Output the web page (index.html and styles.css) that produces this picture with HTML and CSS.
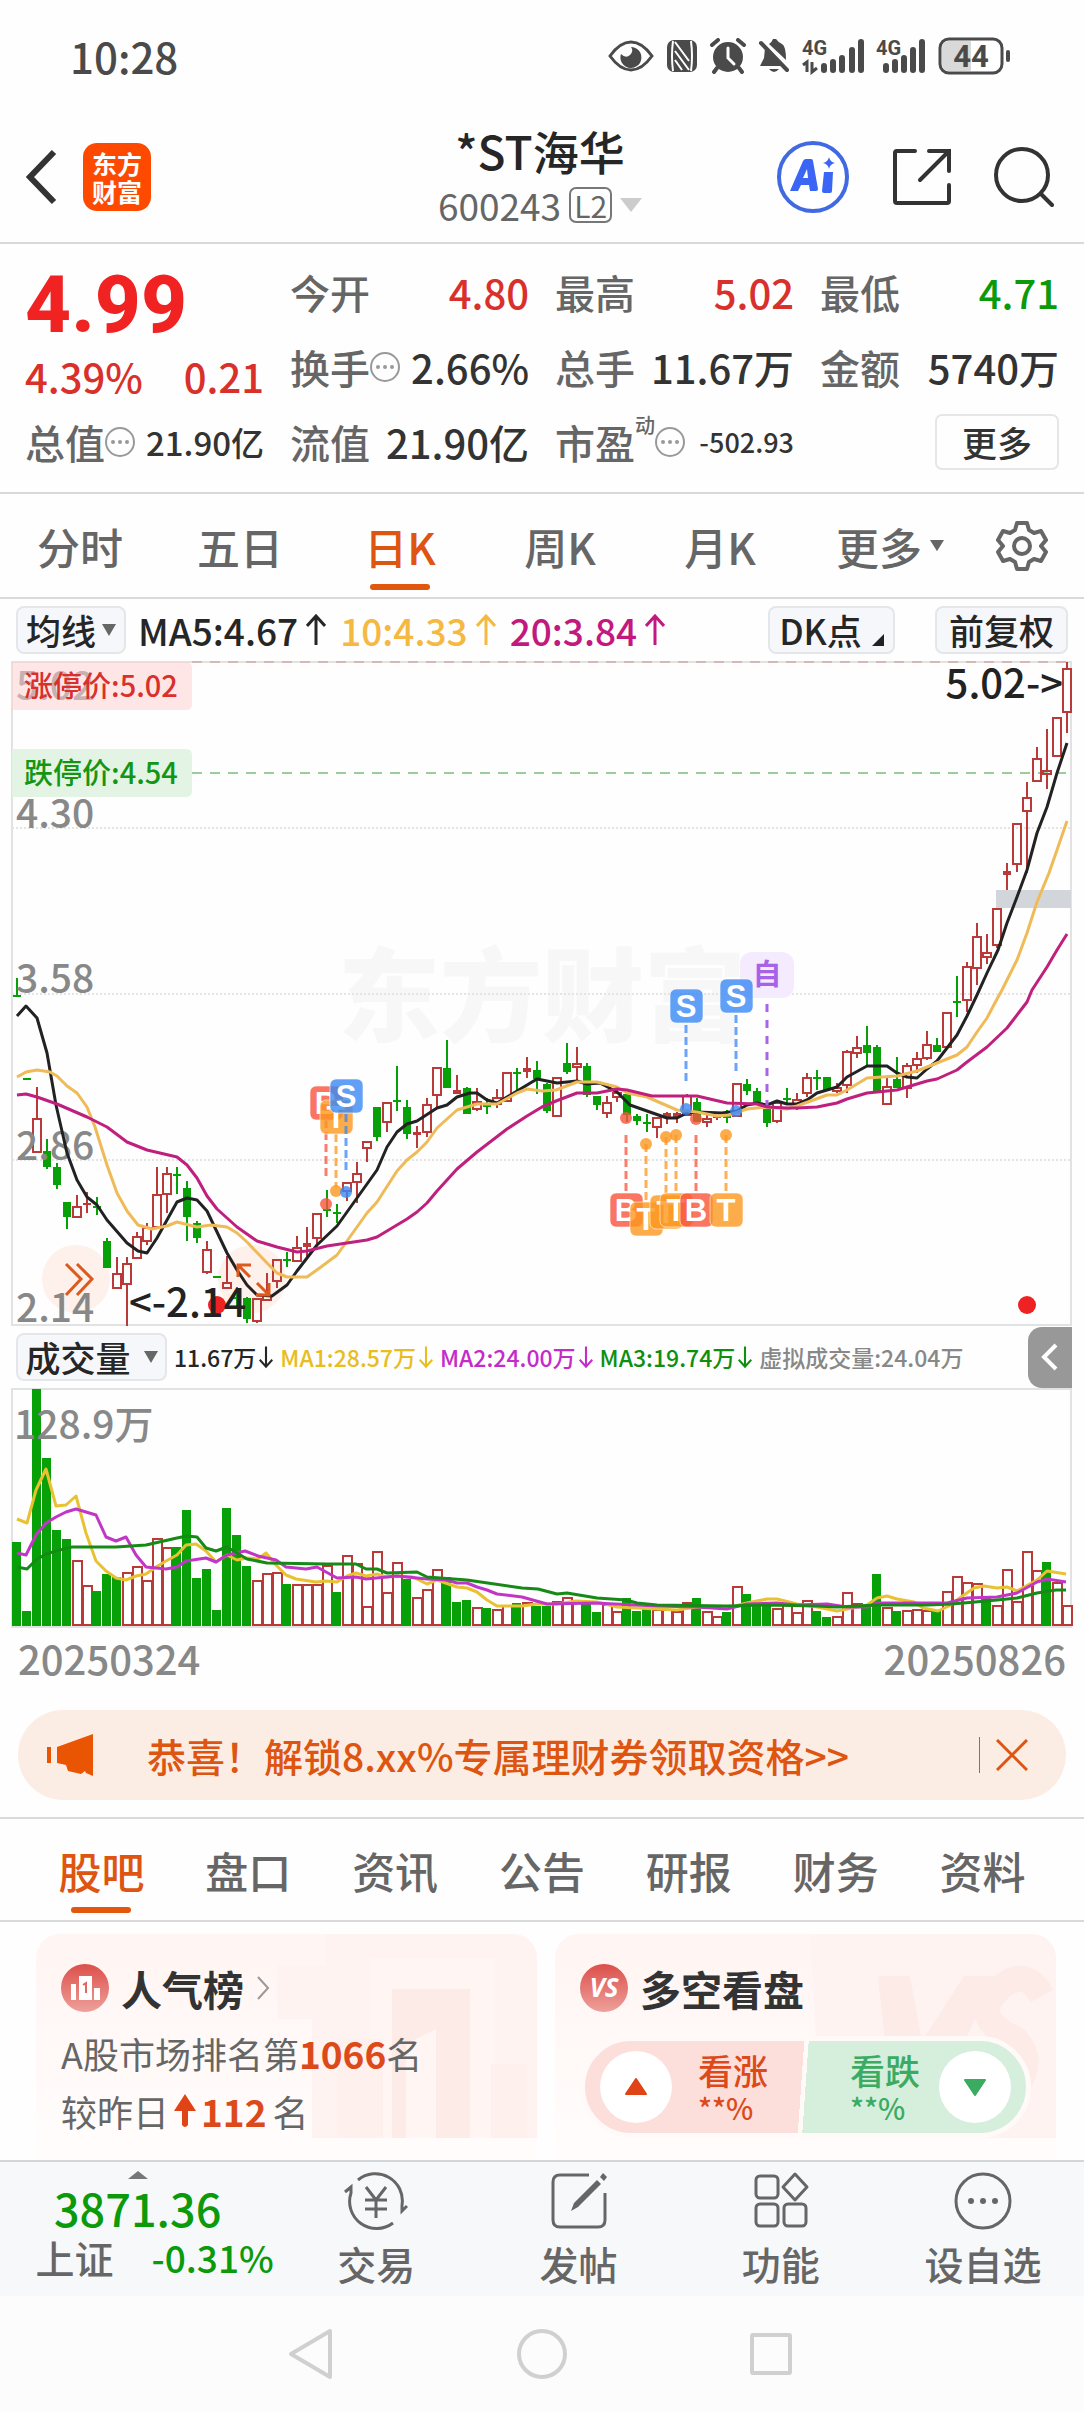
FILE: index.html
```html
<!DOCTYPE html>
<html lang="zh-CN">
<head>
    <meta charset="UTF-8">
    <meta name="viewport" content="width=device-width, initial-scale=1.0">
    <title>*ST海华 600243</title>
    <link rel="stylesheet" href="styles.css">
</head>
<body>
    <div class="status-bar">
        <span class="clock">10:28</span>
        <div class="status-icons">
            <svg width="46" height="34" viewBox="0 0 46 34"><path d="M2 17Q12 3 23 3T44 17Q34 31 23 31T2 17Z" fill="none" stroke="#4a4a4a" stroke-width="3"/><path d="M23 8a10.500 10.500 0 1 1-10 7q5 5 9 1t1-8z" fill="#4a4a4a"/></svg>
            <svg width="32" height="34" viewBox="0 0 32 34"><rect x="1" y="1" width="30" height="32" rx="7" fill="#4a4a4a"/><path d="M7 2q-2 15 0 30M25 2q2 15 0 30" fill="none" stroke="#fff" stroke-width="2"/><path d="M9 3l14 19M9 12l14 19M9 21l7 10" stroke="#fff" stroke-width="2"/></svg>
            <svg width="36" height="36" viewBox="0 0 36 36"><circle cx="18" cy="19" r="15" fill="#4a4a4a"/><path d="M2 7l6-5M34 7l-6-5M7 30l-3 4M29 30l3 4" stroke="#4a4a4a" stroke-width="4" stroke-linecap="round"/><path d="M18 10v10l6 6" fill="none" stroke="#fff" stroke-width="3" stroke-linecap="round"/></svg>
            <svg width="32" height="36" viewBox="0 0 32 36"><path d="M7 10L26 28H2l4-8zM11 6q3-2 4-5h3q2 3 6 5t4 16zM11 31h10q-5 6-10 0z" fill="#4a4a4a"/><path d="M3 5l26 27" stroke="#4a4a4a" stroke-width="4" stroke-linecap="round"/></svg>
            <svg width="62" height="38" viewBox="0 0 62 38"><text x="0" y="18" class="net">4G</text><path d="M1 28l4-3v10M10 25v10l5-4" fill="none" stroke="#4a4a4a" stroke-width="3"/><path d="M22 29v4M31 25v8M40 21v12M50 13v20M59 5v28" stroke="#4a4a4a" stroke-width="6" stroke-linecap="round"/></svg>
            <svg width="50" height="38" viewBox="0 0 50 38"><text x="0" y="18" class="net">4G</text><path d="M10 29v4M19 25v8M28 21v12M37 13v20M46 5v28" stroke="#4a4a4a" stroke-width="6" stroke-linecap="round"/></svg>
            <svg width="74" height="38" viewBox="0 0 74 38"><rect x="2" y="2" width="62" height="34" rx="9" fill="#fff" stroke="#4a4a4a" stroke-width="3"/><path d="M11 4h22v30H11q-7 0-7-7V11q0-7 7-7z" fill="#d9d9d9"/><path d="M70 15v8" stroke="#4a4a4a" stroke-width="4" stroke-linecap="round"/><text x="33" y="30" class="level">44</text></svg>
        </div>
    </div>

    <header class="top-bar">
        <div class="top-left">
            <button class="plain" aria-label="返回"><svg width="32" height="56" viewBox="0 0 32 56"><path d="M28 3L4 28l24 25" fill="none" stroke="#333" stroke-width="6"/></svg></button>
            <a class="logo" href="#"><span>东方</span><span>财富</span></a>
        </div>
        <div class="stock">
            <h1>*ST海华</h1>
            <button class="plain code">600243<span class="level-tag">L2</span><svg width="22" height="16" viewBox="0 0 22 16"><path d="M0 1h22L11 15z" fill="#ccc"/></svg></button>
        </div>
        <div class="top-right">
            <button class="plain" aria-label="AI"><svg width="74" height="74" viewBox="0 0 74 74"><circle cx="37" cy="37" r="34" fill="#fff" stroke="#4169e1" stroke-width="4"/><path d="M14 51L27 21q1-2 3-2h5q2 0 2 2l5 28q0 2-2 2h-6l-1-6h-8l-3 6zM27 38h5l-1-9z" fill="#3b66f5" fill-rule="evenodd"/><path d="M48 32h9l-1 19q0 2-2 2h-6q-2 0-2-2zM53 17q1 5 6 6-5 1-6 6-1-5-6-6 5-1 6-6z" fill="#3b66f5"/></svg></button>
            <button class="plain" aria-label="分享"><svg width="60" height="60" viewBox="0 0 60 60"><path d="M23 4H5q-2 0-2 2v48q0 2 2 2h50q2 0 2-2V38M37 4h20v20M57 4L28 33" fill="none" stroke="#333" stroke-width="4" stroke-linecap="round"/></svg></button>
            <button class="plain" aria-label="搜索"><svg width="60" height="60" viewBox="0 0 60 60"><circle cx="28" cy="28" r="26" fill="none" stroke="#333" stroke-width="4"/><path d="M47 47l11 11" stroke="#333" stroke-width="4" stroke-linecap="round"/></svg></button>
        </div>
    </header>

    <section class="quote">
        <div class="last">
            <strong>4.99</strong>
            <div class="change"><span>4.39%</span><span>0.21</span></div>
        </div>
        <div class="item"><span>今开</span><b class="up">4.80</b></div>
        <div class="item"><span>最高</span><b class="up">5.02</b></div>
        <div class="item"><span>最低</span><b class="down">4.71</b></div>
        <div class="item"><span>换手<svg class="info" viewBox="0 0 30 30"><use href="#info"/></svg></span><b>2.66%</b></div>
        <div class="item"><span>总手</span><b>11.67万</b></div>
        <div class="item"><span>金额</span><b>5740万</b></div>
        <div class="item"><span>总值<svg class="info" viewBox="0 0 30 30"><use href="#info"/></svg></span><b class="medium">21.90亿</b></div>
        <div class="item"><span>流值</span><b>21.90亿</b></div>
        <div class="item"><span>市盈<sup>动</sup><svg class="info" viewBox="0 0 30 30"><use href="#info"/></svg></span><b class="small">-502.93</b></div>
        <div class="item end"><button class="more">更多</button></div>
    </section>

    <nav class="period-tabs">
        <button>分时</button>
        <button>五日</button>
        <button class="active">日K</button>
        <button>周K</button>
        <button>月K</button>
        <button>更多<svg width="14" height="14" viewBox="0 0 16 14"><path d="M0 0h16L8 13z" fill="#666"/></svg></button>
        <button aria-label="设置"><svg width="52" height="52" viewBox="0 0 52 52"><path d="M21 3h10l2 7 5 3 7-2 5 9-5 6 5 6-5 9-7-2-5 3-2 7H21l-2-7-5-3-7 2-5-9 5-6-5-6 5-9 7 2 5-3z" fill="none" stroke="#666" stroke-width="4" stroke-linejoin="round"/><circle cx="26" cy="26" r="8" fill="none" stroke="#666" stroke-width="4"/></svg></button>
    </nav>

    <div class="chart-bar">
        <span class="picker"><select aria-label="主图指标"><option>均线</option></select><svg width="14" height="12" viewBox="0 0 14 12"><path d="M0 0h14L7 12z" fill="#666"/></svg></span>
        <span class="ma ma5">MA5:4.67<svg class="arrow" viewBox="0 0 20 32"><use href="#up"/></svg></span>
        <span class="ma ma10">10:4.33<svg class="arrow" viewBox="0 0 20 32"><use href="#up"/></svg></span>
        <span class="ma ma20">20:3.84<svg class="arrow" viewBox="0 0 20 32"><use href="#up"/></svg></span>
        <button class="chip dk">DK点<svg width="12" height="12" viewBox="0 0 12 12"><path d="M12 0v12H0z" fill="#222"/></svg></button>
        <button class="chip">前复权</button>
    </div>
    <svg id="kline" class="chart" viewBox="0 0 1084 666"></svg>

    <div class="volume-bar">
        <span class="picker wide"><select aria-label="副图指标"><option>成交量</option></select><svg width="14" height="12" viewBox="0 0 14 12"><path d="M0 0h14L7 12z" fill="#666"/></svg></span>
        <span class="vol">11.67万<svg class="arrow" viewBox="0 0 20 32"><use href="#down"/></svg></span>
        <span class="vol vol1">MA1:28.57万<svg class="arrow" viewBox="0 0 20 32"><use href="#down"/></svg></span>
        <span class="vol vol2">MA2:24.00万<svg class="arrow" viewBox="0 0 20 32"><use href="#down"/></svg></span>
        <span class="vol vol3">MA3:19.74万<svg class="arrow" viewBox="0 0 20 32"><use href="#down"/></svg></span>
        <span class="vol muted">虚拟成交量:24.04万</span>
        <button class="drawer" aria-label="展开"><svg width="18" height="30" viewBox="0 0 18 30"><path d="M15 3L3 15l12 12" fill="none" stroke="#fff" stroke-width="4"/></svg></button>
    </div>
    <svg id="volume" class="chart" viewBox="0 0 1084 242"></svg>
    <div class="dates"><span>20250324</span><span>20250826</span></div>

    <div class="notice">
        <svg width="48" height="42" viewBox="0 0 48 42"><path d="M0 13h4v16H0zM10 13L46 0v42l-7-3-1-2-4 3-13-3-2-6-9-2z" fill="#ea5504"/></svg>
        <a href="#">恭喜！解锁8.xx%专属理财券领取资格&gt;&gt;</a>
        <button class="plain close" aria-label="关闭"><svg width="32" height="32" viewBox="0 0 32 32"><path d="M1 1l30 30M31 1L1 31" stroke="#dd5510" stroke-width="3"/></svg></button>
    </div>

    <nav class="info-tabs">
        <button class="active">股吧</button>
        <button>盘口</button>
        <button>资讯</button>
        <button>公告</button>
        <button>研报</button>
        <button>财务</button>
        <button>资料</button>
    </nav>

    <main class="cards">
        <section class="card">
            <svg class="card-art" width="260" height="204" viewBox="0 0 260 204"><path d="M48 0h212v204H35V85H0V32h48z" fill="#fef3f1"/><path d="M93 25h125v179H93z" fill="#fff6f3"/><path d="M115 55h78v149h-34v-109l-30 15v94h-14z" fill="#fdebe8"/><path d="M61 105h45v99H61zM214 130h36v74h-36z" fill="#fef0ed"/></svg>
            <h2><svg width="48" height="48" viewBox="0 0 48 48"><circle cx="24" cy="24" r="24" fill="url(#badge)"/><path d="M10 20h5v16h-5zM18 12h13v24H18zM33 24h6v12h-6z" fill="#fff"/><path d="M22 21l3-2v10" fill="none" stroke="#df6861" stroke-width="2"/></svg>人气榜<svg class="go" width="14" height="24" viewBox="0 0 14 24"><path d="M2 1l10 11L2 23" fill="none" stroke="#999" stroke-width="2"/></svg></h2>
            <p>A股市场排名第<b>1066</b>名</p>
            <p>较昨日<svg width="24" height="34" viewBox="0 0 24 34"><path d="M12 0l11 17H1zM9 14h6v17q-3 4-6 0z" fill="#e04416"/></svg><b>112</b> 名</p>
        </section>
        <section class="card">
            <svg class="card-art" width="246" height="204" viewBox="0 0 246 204"><path d="M0 0h246v204H12z" fill="#fef3f1"/><path d="M68 42h32l12 65 42-65h32l-72 150H84z" fill="#fdebe8"/><path d="M232 62q-18-32-45-5t18 48q22 22-2 52-14 14-40-5" fill="none" stroke="#fdebe8" stroke-width="26"/></svg>
            <h2><svg width="48" height="48" viewBox="0 0 48 48"><circle cx="24" cy="24" r="24" fill="url(#badge)"/><text x="24" y="33" class="vs">VS</text></svg>多空看盘</h2>
            <div class="vote">
                <button class="bull"><i><svg width="24" height="18" viewBox="0 0 24 18"><path d="M12 1l10 15H2z" fill="#e04416" stroke="#e04416" stroke-width="2" stroke-linejoin="round"/></svg></i><span>看涨<small>**%</small></span></button>
                <button class="bear"><span>看跌<small>**%</small></span><i><svg width="24" height="18" viewBox="0 0 24 18"><path d="M12 17L2 2h20z" fill="#3cab62" stroke="#3cab62" stroke-width="2" stroke-linejoin="round"/></svg></i></button>
            </div>
        </section>
    </main>

    <footer class="tool-bar">
        <a class="index" href="#">
            <svg width="20" height="8" viewBox="0 0 20 8"><path d="M10 0l10 8H0z" fill="#777"/></svg>
            <b>3871.36</b>
            <span class="index-name">上证<em>-0.31%</em></span>
        </a>
        <button><svg width="64" height="60" viewBox="0 0 64 60"><path d="M14 9a27 27 0 0 1 44 25v6l5-5M49 52A27 27 0 0 1 7 22v-6l-6 5" fill="none" stroke="#666" stroke-width="3"/><path d="M22 16l10 13 10-13M32 29v18M21 29h22M21 38h22" fill="none" stroke="#666" stroke-width="3"/></svg>交易</button>
        <button><svg width="60" height="60" viewBox="0 0 60 60"><path d="M40 4H11q-7 0-7 7v38q0 7 7 7h38q7 0 7-7V22" fill="none" stroke="#666" stroke-width="3"/><path d="M22 40l3-8L48 9l4 4-23 23zM51 6l3-4 4 4-3 4z" fill="#666"/></svg>发帖</button>
        <button><svg width="60" height="60" viewBox="0 0 60 60"><g fill="none" stroke="#666" stroke-width="3"><rect x="5" y="5" width="22" height="22" rx="4"/><rect x="5" y="33" width="22" height="22" rx="4"/><rect x="33" y="33" width="22" height="22" rx="4"/><path d="M44 3l12 13-12 13-12-13z" stroke-linejoin="round"/></g></svg>功能</button>
        <button><svg width="60" height="60" viewBox="0 0 60 60"><circle cx="30" cy="30" r="27" fill="none" stroke="#666" stroke-width="3"/><g fill="#666"><circle cx="18" cy="30" r="3"/><circle cx="30" cy="30" r="3"/><circle cx="42" cy="30" r="3"/></g></svg>设自选</button>
    </footer>
    <div class="system-nav">
        <button class="plain" aria-label="后退"><svg width="50" height="52" viewBox="0 0 50 52"><path d="M42 3v46L3 26z" fill="none" stroke="#d0d0d0" stroke-width="4" stroke-linejoin="round"/></svg></button>
        <button class="plain" aria-label="主页"><svg width="50" height="52" viewBox="0 0 50 52"><circle cx="25" cy="26" r="23" fill="none" stroke="#d0d0d0" stroke-width="4"/></svg></button>
        <button class="plain" aria-label="最近任务"><svg width="50" height="52" viewBox="0 0 50 52"><rect x="6" y="7" width="38" height="38" rx="1" fill="none" stroke="#d0d0d0" stroke-width="4"/></svg></button>
    </div>

    <svg class="defs" width="0" height="0">
        <defs>
            <linearGradient id="badge" x1="0" y1="0" x2="0" y2="1"><stop offset="0" stop-color="#dc504b"/><stop offset="1" stop-color="#eea09a"/></linearGradient>
            <g id="info"><circle cx="15" cy="15" r="14" fill="none" stroke="#999" stroke-width="2"/><circle cx="8" cy="15" r="2" fill="#999"/><circle cx="15" cy="15" r="2" fill="#999"/><circle cx="22" cy="15" r="2" fill="#999"/></g>
            <path id="up" d="M10 31V3M1 12l9-10 9 10" fill="none" stroke="currentColor" stroke-width="3"/>
            <path id="down" d="M10 1v28M1 20l9 10 9-10" fill="none" stroke="currentColor" stroke-width="3"/>
        </defs>
    </svg>
    <script src="chart.js"></script>
</body>
</html>
```

FILE: styles.css
```css
* {
    box-sizing: border-box;
}

body {
    margin: 0;
    min-height: 100vh;
    display: flex;
    flex-direction: column;
    background-color: #fefefe;
    color: #333;
    font-family: "Noto Sans CJK SC", "Noto Sans", sans-serif;
    font-size: 40px;
    font-weight: 500;
    line-height: 48px;
    white-space: nowrap;
}

button, select {
    font: inherit;
    color: inherit;
    margin: 0;
    padding: 0;
    border: none;
    background: none;
    cursor: pointer;
}

a {
    color: inherit;
    text-decoration: none;
}

svg {
    flex: none;
}

.plain {
    display: flex;
    align-items: center;
}

.defs {
    position: absolute;
}

/* phone status bar */
.status-bar {
    display: flex;
    justify-content: space-between;
    align-items: center;
    height: 112px;
    padding: 0 72px 0 70px;
    color: #4a4a4a;
}

.clock {
    font-size: 42px;
}

.status-icons {
    display: flex;
    align-items: center;
    gap: 12px;
}

.net {
    font: bold 20px Roboto, sans-serif;
    fill: #4a4a4a;
}

.level {
    font: bold 31px Roboto, sans-serif;
    fill: #4a4a4a;
    text-anchor: middle;
}

/* header */
.top-bar {
    display: grid;
    grid-template-columns: 1fr auto 1fr;
    align-items: center;
    height: 132px;
    padding: 0 30px 0 26px;
    border-bottom: 2px solid #d9d9d9;
}

.top-left, .top-right {
    display: flex;
    align-items: center;
    gap: 25px;
}

.top-right {
    justify-content: flex-end;
    gap: 42px;
}

.logo {
    display: flex;
    flex-direction: column;
    align-items: center;
    justify-content: center;
    width: 68px;
    height: 68px;
    border-radius: 14px;
    background-color: #fe4a00;
    color: white;
    font-size: 25px;
    font-weight: bold;
    line-height: 28px;
}

.stock {
    display: flex;
    flex-direction: column;
    align-items: center;
    padding-bottom: 6px;
}

.stock h1 {
    margin: 0;
    color: #262626;
    font-size: 46px;
    font-weight: 500;
    line-height: 62px;
}

.code {
    gap: 8px;
    color: #666;
    font-size: 37px;
    font-weight: 400;
}

.level-tag {
    padding: 0 3px;
    border: 2px solid #777;
    border-radius: 7px;
    font-size: 30px;
    line-height: 32px;
}

/* quote panel */
.quote {
    display: grid;
    grid-template-columns: repeat(4, 1fr);
    grid-template-rows: repeat(3, 75px);
    column-gap: 26px;
    align-items: center;
    height: 250px;
    padding: 10px 25px;
    border-bottom: 2px solid #d9d9d9;
}

.last {
    grid-row: span 2;
    color: #d9302c;
}

.last strong {
    display: block;
    color: #f02222;
    font-family: Roboto, sans-serif;
    font-size: 80px;
    font-weight: 800;
    line-height: 94px;
}

.change, .item {
    display: flex;
    justify-content: space-between;
    align-items: center;
}

.item > span {
    display: flex;
    align-items: center;
    color: #666;
}

.item b {
    font-weight: 500;
}

.item .medium {
    font-size: 33px;
}

.item .small {
    font-size: 27px;
}

.item sup {
    align-self: flex-start;
    font-size: 20px;
    line-height: 14px;
}

.info {
    width: 30px;
    height: 30px;
}

.up {
    color: #d9302c;
}

.down {
    color: #0a9a0a;
}

.item.end {
    justify-content: flex-end;
}

.more {
    width: 124px;
    height: 56px;
    border: 2px solid #e6e6e6;
    border-radius: 7px;
    font-size: 35px;
}

/* tabs */
.period-tabs, .info-tabs {
    display: grid;
    height: 105px;
    border-bottom: 2px solid #d9d9d9;
    color: #666;
    font-size: 43px;
}

.period-tabs {
    grid-template-columns: repeat(5, 160fr) 180fr 84fr;
    padding-right: 20px;
}

.info-tabs {
    grid-template-columns: repeat(7, 1fr);
    margin-top: 17px;
    padding: 0 28px;
    border-top: 2px solid #d9d9d9;
}

.period-tabs button, .info-tabs button {
    display: flex;
    align-items: center;
    justify-content: center;
    gap: 8px;
    position: relative;
}

.period-tabs .active, .info-tabs .active {
    color: #dd5510;
}

.period-tabs .active::after, .info-tabs .active::after {
    content: "";
    position: absolute;
    bottom: 7px;
    width: 60px;
    height: 6px;
    border-radius: 3px;
    background-color: #e1570d;
}

/* chart tool bars */
.chart-bar, .volume-bar {
    display: flex;
    align-items: center;
    height: 61px;
    padding: 0 16px;
    color: #262626;
    font-size: 37px;
}

.picker, .chip {
    display: flex;
    align-items: center;
    justify-content: center;
    height: 48px;
    border: 2px solid #e4e6ea;
    border-radius: 8px;
    background-color: #f6f7fa;
    font-size: 35px;
}

.picker {
    gap: 5px;
    width: 110px;
    margin-right: 12px;
}

.picker.wide {
    gap: 12px;
    width: 151px;
    margin-right: 0;
}

.picker select {
    appearance: none;
    outline: none;
}

.chip {
    width: 133px;
    margin-left: 40px;
}

.chip.dk {
    gap: 10px;
    width: 127px;
    margin-left: auto;
}

.chip.dk svg {
    align-self: flex-end;
    margin-bottom: 6px;
}

.ma, .vol {
    display: flex;
    align-items: center;
    gap: 8px;
    margin-right: 14px;
}

.ma .arrow {
    width: 20px;
    height: 32px;
}

.ma10 { color: #f5b942; }
.ma20 { color: #c2187f; }

.volume-bar {
    height: 62px;
    padding-right: 12px;
}

.vol {
    gap: 3px;
    margin: 0 0 0 7px;
    font-size: 23px;
}

.vol .arrow {
    width: 14px;
    height: 30px;
}

.vol1 { color: #e8bd1e; }
.vol2 { color: #c32cc9; }
.vol3 { color: #0f8f0f; }
.muted { color: #888; }

.drawer {
    display: flex;
    align-items: center;
    justify-content: center;
    width: 44px;
    height: 61px;
    margin-left: auto;
    border-radius: 14px 0 0 14px;
    background-color: #989898;
}

.chart {
    display: block;
    width: 100%;
}

.axis {
    font-size: 39px;
    fill: #888;
}

.mark {
    font-size: 40px;
    fill: #222;
}

.watermark {
    font-size: 102px;
    font-weight: 900;
    fill: #f7f7f7;
}

.limit {
    font-size: 29px;
}

.tag {
    font: bold 31px "Liberation Sans", sans-serif;
    fill: white;
    text-anchor: middle;
}

.self {
    font-size: 29px;
    font-weight: bold;
    fill: #a763e8;
    text-anchor: middle;
}

.dates {
    display: flex;
    justify-content: space-between;
    padding: 4px 18px 0;
    color: #888;
}

/* notice */
.notice {
    display: flex;
    align-items: center;
    height: 90px;
    margin: 28px 18px 0;
    padding: 0 38px 0 29px;
    border-radius: 45px;
    background-color: #fcede4;
    color: #dd5510;
    font-size: 39px;
}

.notice a {
    margin-left: 52px;
}

.close {
    height: 36px;
    margin-left: auto;
    padding-left: 16px;
    border-left: 1px solid #dd5510;
}

/* cards */
.cards {
    display: grid;
    grid-template-columns: 1fr 1fr;
    gap: 18px;
    flex: 1;
    padding: 12px 28px 0 36px;
}

.card {
    position: relative;
    padding: 30px 25px 0;
    border-radius: 24px 24px 0 0;
    overflow: hidden;
    background: linear-gradient(#fff5f3, #fffdfc);
    color: #666;
    font-size: 36px;
}

.card-art {
    position: absolute;
    top: 0;
    right: 0;
}

.card h2 {
    position: relative;
    display: flex;
    align-items: center;
    gap: 12px;
    margin: 0 0 12px;
    color: #333;
    font-size: 41px;
    font-weight: bold;
    line-height: 48px;
}

.card p {
    position: relative;
    display: flex;
    align-items: center;
    margin: 0;
    font-weight: 400;
    line-height: 58px;
}

.card p svg {
    margin: 0 4px;
}

.card p b {
    color: #dd4a1a;
    font-size: 37px;
}

.card p svg + b {
    margin-right: 6px;
}

.vs {
    font: italic bold 26px "Open Sans", sans-serif;
    fill: white;
    text-anchor: middle;
}

.vote {
    position: relative;
    display: flex;
    height: 102px;
    margin-top: 24px;
    border: 5px solid #fffaf8;
    border-radius: 51px;
    overflow: hidden;
    background: linear-gradient(94deg, #fcdedb 49%, #fffaf8 49% 50%, #d6eedc 50%);
    font-size: 35px;
    line-height: 40px;
}

.vote button {
    display: flex;
    flex: 1;
    align-items: center;
    gap: 26px;
    padding-left: 15px;
    text-align: left;
}

.vote .bear {
    justify-content: flex-end;
    gap: 19px;
    padding: 0 15px 0 0;
}

.vote i {
    display: flex;
    align-items: center;
    justify-content: center;
    width: 72px;
    height: 72px;
    border-radius: 50%;
    background-color: white;
}

.vote small {
    display: block;
    font-size: 29px;
    line-height: 34px;
}

.bull { color: #dd4a1a; }
.vote .bear { color: #3cab62; }

/* bottom bars */
.tool-bar {
    display: grid;
    grid-template-columns: 275fr repeat(4, 202fr);
    height: 136px;
    border-top: 2px solid #d4d7da;
    background-color: #f7f8fa;
    color: #666;
    font-size: 39px;
}

.tool-bar button, .index {
    display: flex;
    flex-direction: column;
    align-items: center;
    padding-top: 9px;
}

.tool-bar button {
    gap: 9px;
    line-height: 46px;
}

.index b {
    color: #0a9a0a;
    font-size: 45px;
    font-weight: 500;
    line-height: 58px;
}

.index-name {
    display: flex;
    align-items: center;
    gap: 38px;
    margin-left: 34px;
    line-height: 40px;
}

.index-name em {
    color: #0a9a0a;
    font-size: 37px;
    font-style: normal;
}

.system-nav {
    display: flex;
    align-items: center;
    justify-content: center;
    gap: 179px;
    height: 116px;
    background-color: #fcfcfc;
}
```

FILE: chart.js
```js
const RED = '#b93a38';
const GREEN = '#08a008';

// one entry per day: [direction, high, body top, body bottom, low]
const candles = [
    ['g',318,335,337,337],['g',418,418,420,420],['r',427,458,493,493],['g',479,491,507,509],['g',503,507,525,529],
    ['g',542,542,557,569],['r',535,546,558,558],['r',532,543,545,553],['g',537,546,548,555],['g',578,581,608,608],
    ['r',597,613,629,629],['r',597,603,625,666],['r',572,576,599,599],['r',563,567,582,585],['r',507,534,568,568],
    ['r',507,513,535,553],['g',507,514,516,534],['g',521,528,557,581],['g',561,563,578,583],['r',581,589,613,614],
    ['g',616,616,618,618],['r',596,622,629,629],['g',627,637,639,648],['g',637,638,659,663],['r',638,638,662,663],
    ['r',613,635,641,641],['r',599,599,622,628],['g',592,599,601,607],['r',576,587,602,602],['r',567,583,587,597],
    ['r',553,553,579,585],['g',530,549,551,557],['g',544,552,554,563],['r',522,522,532,541],['r',502,513,523,543],
    ['r',481,481,489,502],['g',447,447,477,481],['r',442,442,463,472],['g',406,440,442,451],['g',440,447,474,479],
    ['r',466,472,475,488],['r',438,444,473,477],['r',407,407,436,447],['g',380,408,428,428],['r',415,430,434,434],
    ['g',427,428,454,454],['r',428,441,450,451],['g',438,445,447,454],['r',429,437,445,448],['r',412,412,442,442],
    ['g',408,412,414,430],['r',397,408,412,418],['g',401,410,419,434],['g',423,424,451,453],['r',417,417,457,457],
    ['g',383,403,412,414],['r',387,403,408,420],['g',403,406,435,437],['g',436,436,445,450],['r',436,442,454,458],
    ['r',427,432,438,442],['g',434,434,455,462],['g',454,456,461,465],['g',454,462,464,472],['r',457,457,468,478],
    ['r',452,453,457,464],['r',452,453,457,463],['r',434,435,456,456],['g',438,442,462,462],['r',455,458,463,467],
    ['r',456,456,458,460],['g',450,456,458,463],['r',423,423,457,457],['g',419,424,431,435],['g',428,431,442,445],
    ['g',449,449,463,467],['r',442,442,462,463],['g',428,438,440,443],['r',433,439,445,450],['r',413,417,434,437],
    ['g',410,417,419,430],['g',417,417,430,430],['r',423,427,432,433],['r',390,391,426,433],['r',376,387,394,398],
    ['g',366,385,393,405],['g',385,387,431,431],['r',417,426,445,445],['g',397,419,428,428],['r',403,405,429,438],
    ['r',392,398,406,413],['r',371,384,399,400],['g',378,385,392,392],['r',352,352,388,388],['g',316,341,343,357],
    ['r',302,306,341,352],['r',263,276,309,325],['r',274,292,298,304],['r',248,248,286,288],['r',203,211,215,230],
    ['r',163,163,205,212],['r',122,137,152,213],['r',87,98,122,122],['r',69,110,115,129],['r',57,57,97,97],
    ['r',2,8,53,73]
];

const averages = [
    ['#222', '17,356 26,346 37,358 47,393 56,445 67,493 77,520 87,537 97,545 107,560 127,583 138,591 147,593 157,578 177,542 187,538 197,540 207,551 217,572 227,593 237,610 247,625 257,635 272,636 287,625 297,611 317,585 337,566 357,538 377,510 387,487 397,472 407,464 417,461 437,448 447,445 457,437 470,433 477,433 487,440 497,443 507,437 537,419 557,423 577,421 587,424 600,423 617,432 630,445 647,451 667,458 677,458 687,453 697,452 722,453 737,451 747,445 757,443 767,445 777,441 787,444 797,444 807,440 817,433 837,427 847,417 867,406 887,406 897,413 907,417 917,418 927,409 937,401 947,388 957,375 967,356 977,335 987,313 998,290 1007,263 1017,237 1027,210 1037,173 1047,147 1057,113 1067,83'],
    ['#efbb58', '17,417 26,412 37,410 50,412 57,416 67,426 77,433 87,447 95,467 107,505 117,533 127,551 138,565 152,569 167,566 177,562 197,567 211,565 227,567 237,573 247,582 267,603 277,613 287,617 307,617 321,607 337,595 357,567 367,553 377,542 397,511 407,500 417,492 427,482 437,468 457,450 477,444 497,444 517,433 527,429 542,431 556,430 577,422 597,422 617,427 627,433 647,437 677,450 697,452 717,456 729,455 747,449 767,447 787,449 797,446 827,435 837,435 847,430 867,418 897,416 917,411 937,403 957,395 967,387 977,372 987,358 997,339 1002,330 1017,300 1027,273 1037,242 1049,213 1057,190 1067,161'],
    ['#bf1f7d', '17,435 26,434 37,437 57,444 87,457 97,462 107,467 127,482 147,490 177,497 187,505 197,518 207,536 217,549 237,567 257,581 277,587 297,592 307,591 327,586 347,583 367,580 377,577 397,565 407,559 417,552 427,543 437,531 457,509 477,492 507,469 527,456 542,447 556,441 577,433 597,433 617,429 627,430 652,436 677,436 697,436 727,443 757,444 767,447 787,448 797,448 817,447 837,443 847,439 867,433 897,430 927,421 937,419 957,410 967,402 987,387 1007,368 1027,342 1032,330 1047,307 1057,290 1067,274']
];

const volumes = [
    84,15,237,168,96,87,66,41,35,52,49,54,60,46,88,79,79,116,48,57,16,118,91,60,46,53,54,42,42,42,42,61,34,71,63,20,
    75,34,64,47,29,37,57,49,24,26,19,18,17,21,23,24,20,20,25,29,25,22,14,22,15,28,15,17,17,17,15,24,28,15,10,14,
    40,32,20,24,18,23,14,26,15,9,10,34,23,19,52,19,15,16,17,16,15,35,50,44,43,29,21,57,25,75,56,64,44,21
];
const volumeColors = 'ggggggrrgggrrrrrggggggggrrrgrrrrgrrrrrrgrrrgggrgrrgrggrrrggrrgggrrrrgrrgrgggrrrrggrrrggrgrrrgrrrrgrrrrrgrr';

const volumeAverages = [
    ['#e8c233', '17,131 27,135 36,102 46,81 56,118 66,117 76,108 86,145 96,173 106,183 116,190 126,192 136,188 146,186 156,179 166,173 177,167 186,157 196,156 206,163 216,174 227,167 237,172 247,170 258,171 266,165 276,177 286,187 296,191 316,194 326,193 337,194 347,188 356,185 366,188 377,186 386,189 397,188 413,189 427,196 437,192 457,199 467,200 477,204 487,212 497,218 522,218 537,216 557,216 576,213 597,214 617,219 657,221 677,222 697,219 727,220 747,215 767,211 777,211 797,216 817,219 837,223 857,219 867,217 877,210 887,208 897,211 914,214 923,220 938,223 949,218 961,209 974,200 984,198 997,200 1007,199 1017,203 1037,192 1047,183 1066,186'],
    ['#c136c6', '17,165 26,167 36,147 46,135 56,129 66,124 76,121 96,127 106,149 116,153 126,149 136,167 146,179 166,181 177,179 186,173 206,170 216,174 227,167 245,163 258,168 276,172 286,179 306,181 317,179 337,190 356,189 366,191 397,188 427,191 447,192 457,195 467,195 477,199 487,202 497,206 522,209 547,216 594,215 657,218 697,219 727,221 747,216 777,215 797,217 827,216 847,219 867,219 877,215 947,215 967,210 997,209 1017,205 1037,194 1047,191 1066,194'],
    ['#168a16', '17,179 27,181 36,172 46,166 56,163 72,159 116,159 146,157 177,150 187,148 197,149 206,160 216,163 227,159 237,165 247,171 267,175 327,176 356,176 366,181 377,181 387,185 417,184 427,189 467,192 522,200 538,201 557,206 567,205 597,210 626,212 637,215 657,217 727,218 767,217 817,218 837,219 877,217 927,217 952,216 975,214 997,212 1017,210 1037,205 1056,202 1066,202']
];

// trade marks: [letter, x, box top, line start, line end, dot y]
const trades = [
    ['B',326,426,460,518,544],['T',336,440,474,527,531],['S',346,419,454,512,532],
    ['S',686,329,365,421,449],['S',736,319,355,411,451],
    ['B',626,533,475,531,458],['T',646,542,484,540,484],['T',666,535,477,533,477],
    ['T',676,533,475,531,475],['B',696,533,475,531,459],['T',726,533,475,531,475]
];
const tradeColors = { B: '#f9543c', T: '#fd971f', S: '#3a88f5' };

function line(x1, y1, x2, y2, color, extra = '') {
    return `<path d="M${x1} ${y1}L${x2} ${y2}" stroke="${color}" ${extra}/>`;
}

function polylines(list, width) {
    return list.map(([color, points]) =>
        `<polyline points="${points}" fill="none" stroke="${color}" stroke-width="${width}" stroke-linejoin="round"/>`).join('');
}

function drawKline() {
    let out = '<text class="watermark" x="338" y="374">东方财富</text>';
    [168, 334, 500].forEach(y => out += line(12, y, 1071, y, '#e4e4e4', 'stroke-width="2" stroke-dasharray="2 2"'));
    out += '<path d="M12 2h1059v663H12z" fill="none" stroke="#e2e2e2" stroke-width="2"/>';
    out += line(192, 2, 1067, 2, '#c98e8a', 'stroke-width="1" stroke-dasharray="10 8"');
    out += line(192, 113, 1067, 113, '#3a9a3a', 'stroke-width="1" stroke-dasharray="10 8"');
    out += '<circle cx="76" cy="619" r="34" fill="#fef0ea"/><circle cx="252" cy="619" r="34" fill="#fef0ea"/>';
    out += '<path d="M996 230h75v18h-75z" fill="#d2d6db"/>';

    candles.forEach(([dir, high, top, bottom, low], i) => {
        const x = 17 + i * 10;
        const color = dir === 'r' ? RED : GREEN;
        if (dir === 'r' && bottom - top > 4) {
            out += line(x, high, x, top, color, 'stroke-width="2"') + line(x, bottom, x, low, color, 'stroke-width="2"');
            out += `<rect x="${x - 4}" y="${top + 1}" width="8" height="${bottom - top - 2}" fill="none" stroke="${color}" stroke-width="2"/>`;
        } else {
            out += line(x, high, x, low, color, 'stroke-width="2"');
            out += `<rect x="${x - 4}" y="${top}" width="8" height="${bottom - top}" fill="${color}"/>`;
        }
    });

    [['5.02', 40], ['4.30', 168], ['3.58', 333], ['2.86', 500], ['2.14', 662]]
        .forEach(([label, y]) => out += `<text class="axis" x="16" y="${y}">${label}</text>`);
    out += polylines(averages, 3);

    out += '<path d="M12 2h174q6 0 6 6v36q0 6-6 6H12z" fill="#ffd2d2" fill-opacity=".55"/><text class="limit" x="24" y="37" fill="#d9302c">涨停价:5.02</text>';
    out += '<path d="M12 89h174q6 0 6 6v36q0 6-6 6H12z" fill="#e3f4e4"/><text class="limit" x="24" y="124" fill="#149614">跌停价:4.54</text>';

    out += '<rect x="740" y="292" width="54" height="46" rx="12" fill="#f4ebfe"/><text class="self" x="767" y="325">自</text>';
    out += line(767, 344, 767, 445, '#a763e8', 'stroke-width="3" stroke-dasharray="8 8"');
    trades.forEach(([letter, x, top, from, to, dot]) => {
        const color = tradeColors[letter];
        out += line(x, from, x, to, color, 'stroke-width="3" stroke-dasharray="8 4" opacity=".75"');
        out += `<circle cx="${x}" cy="${dot}" r="6" fill="${color}" opacity=".8"/>`;
        out += `<rect x="${x - 16}" y="${top}" width="33" height="34" rx="6" fill="${color}" fill-opacity=".8" stroke="#fff" stroke-opacity=".6"/>`;
        out += `<text class="tag" x="${x}" y="${top + 28}">${letter}</text>`;
    });

    out += '<circle cx="217" cy="645" r="9" fill="#ee2222"/><circle cx="1027" cy="645" r="9" fill="#ee2222"/>';
    out += '<text class="mark" x="129" y="657">&lt;-2.14</text><text class="mark" x="1063" y="38" text-anchor="end">5.02-&gt;</text>';
    out += '<path d="M66 604l15 15-15 16M77 604l15 15-15 16M251 605h-13v12M238 605l12 12M257 623l12 12M269 623v12h-13" fill="none" stroke="#dd5a1e" stroke-width="3"/>';
    document.getElementById('kline').innerHTML = out;
}

function drawVolume() {
    let out = '<path d="M12 1h1059v238H12z" fill="none" stroke="#e2e2e2" stroke-width="2"/>';
    volumes.forEach((h, i) => {
        const x = 12 + i * 10;
        out += volumeColors[i] === 'r'
            ? `<rect x="${x + 1}" y="${239 - h}" width="9" height="${h - 2}" fill="#fff" stroke="${RED}" stroke-width="2"/>`
            : `<rect x="${x}" y="${238 - h}" width="9" height="${h}" fill="${GREEN}"/>`;
    });
    out += polylines(volumeAverages, 3);
    out += '<text class="axis" x="14" y="51">128.9万</text>';
    document.getElementById('volume').innerHTML = out;
}

drawKline();
drawVolume();
```
